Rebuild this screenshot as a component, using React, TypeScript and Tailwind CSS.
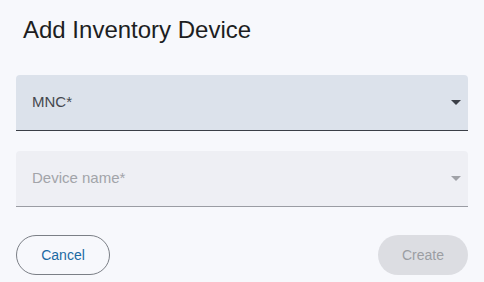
import { ReactNode } from "react"

function Caret({ className }: { className: string }) {
  return (
    <svg viewBox="0 0 10 5" className={className} aria-hidden>
      <path d="M0 0h10L5 5z" fill="currentColor" />
    </svg>
  )
}

function SelectField({ label, disabled }: { label: ReactNode; disabled?: boolean }) {
  return (
    <div
      className={
        disabled
          ? "flex h-14 items-center justify-between rounded-t border-b border-[#9a9ca3] bg-[#eeeff4] pl-4 pr-[7px]"
          : "flex h-14 items-center justify-between rounded-t border-b border-[#3b3f47] bg-[#dce2eb] pl-4 pr-[7px]"
      }
    >
      <span className={disabled ? "text-[15px] text-[#a2a4a9]" : "text-[15px] text-[#45484e]"}>{label}</span>
      <Caret className={disabled ? "h-[5px] w-[10px] text-[#a0a2a7]" : "h-[5px] w-[10px] text-[#3b3f47]"} />
    </div>
  )
}

export default function App() {
  return (
    <div
      className="h-[282px] w-[484px] bg-[#f7f8fc] px-4 pt-[14px]"
      style={{ fontFamily: '"Liberation Sans", Arial, sans-serif' }}
    >
      <h2 className="pl-[7px] text-[24px] leading-8 text-[#1d1e22]">Add Inventory Device</h2>
      <div className="mt-[29px] flex flex-col gap-5">
        <SelectField label="MNC*" />
        <SelectField label="Device name*" disabled />
      </div>
      <div className="mt-[28px] flex items-center justify-between">
        <button
          type="button"
          className="h-10 w-[94px] rounded-full border border-[#7b7f86] text-[14px] text-[#1b6aa3]"
        >
          Cancel
        </button>
        <button
          type="button"
          disabled
          className="h-10 w-[90px] rounded-full bg-[#dcdde2] text-[14px] text-[#9b9da2]"
        >
          Create
        </button>
      </div>
    </div>
  )
}
